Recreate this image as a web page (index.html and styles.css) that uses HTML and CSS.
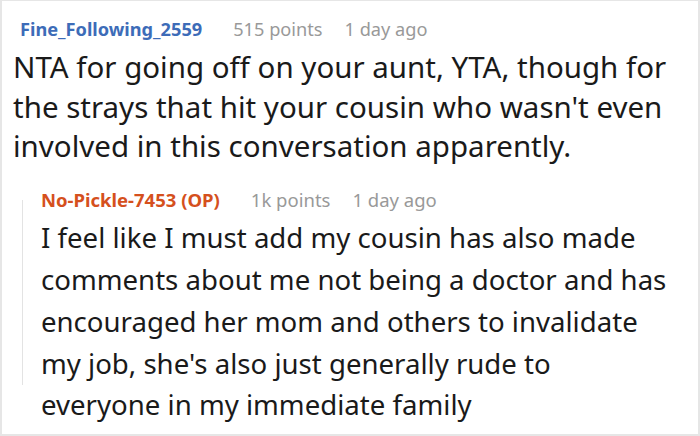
FILE: index.html
```html
<!DOCTYPE html>
<html>
<head>
<meta charset="utf-8">
<link rel="stylesheet" href="styles.css">
</head>
<body>
<div class="card">
  <div class="comment">
    <div class="meta">
      <span class="user user-blue">Fine_Following_2559</span>
      <span class="info">515 points</span>
      <span class="info">1 day ago</span>
    </div>
    <p class="text text-main">NTA for going off on your aunt, YTA, though for the strays that hit your cousin who wasn't even involved in this conversation apparently.</p>
  </div>
  <div class="reply">
    <div class="thread-line"></div>
    <div class="reply-body">
      <div class="meta meta-reply">
        <span class="user user-orange">No-Pickle-7453 (OP)</span>
        <span class="info">1k points</span>
        <span class="info">1 day ago</span>
      </div>
      <p class="text text-reply">I feel like I must add my cousin has also made comments about me not being a doctor and has encouraged her mom and others to invalidate my job, she's also just generally rude to everyone in my immediate family</p>
    </div>
  </div>
</div>
</body>
</html>
```
FILE: styles.css
```css
html, body {
  margin: 0;
  padding: 0;
  background: #ffffff;
}
.card {
  box-sizing: border-box;
  width: 700px;
  height: 436px;
  border: 2px solid #e6e6e6;
  border-top-width: 1px;
  padding: 16px 8px 0 11px;
  font-family: "Noto Sans", sans-serif;
  color: #1a1a1a;
  overflow: hidden;
}
.meta {
  display: flex;
  align-items: baseline;
  gap: 22px;
  font-size: 18.2px;
  line-height: 24px;
  padding-left: 7px;
  white-space: nowrap;
}
.user {
  font-weight: 700;
  margin-right: 9px;
}
.user-blue { color: #3d6cb8; }
.user-orange { color: #d5501d; }
.info { color: #999999; }
.text {
  margin: 0;
  color: #1a1a1a;
}
.text-main {
  font-size: 29.5px;
  line-height: 39.5px;
  margin-top: 6px;
}
.reply {
  display: flex;
  margin-top: 22.5px;
  margin-left: 9px;
}
.thread-line {
  flex: 0 0 1px;
  background: #e3e3e3;
  margin-top: 12px;
  margin-bottom: 41px;
}
.reply-body {
  margin-left: 18px;
}
.meta-reply {
  padding-left: 0;
  font-size: 18.5px;
}
.text-reply {
  font-size: 27.6px;
  line-height: 41.75px;
  margin-top: 5.4px;
  width: 634px;
}
```
